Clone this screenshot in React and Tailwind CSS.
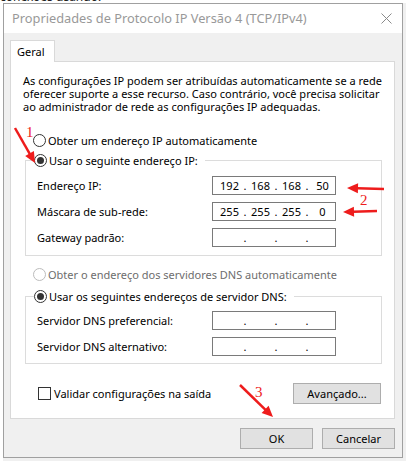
import React from "react";

function Radio({ checked, disabled }) {
  return (
    <span
      className={
        "w-[13px] h-[13px] rounded-full border bg-white flex items-center justify-center shrink-0 " +
        (disabled ? "border-[#bcbcbc]" : "border-[#333333]")
      }
    >
      {checked ? <span className="w-[7px] h-[7px] rounded-full bg-[#333333]" /> : null}
    </span>
  );
}

function IpField({ parts }) {
  return (
    <div className="w-[124px] h-[19px] border border-[#7a7a7a] bg-white flex items-center pl-[5px]">
      {[0, 1, 2, 3].map((i) => (
        <React.Fragment key={i}>
          <span className="w-[23px] text-center">{parts ? parts[i] : ""}</span>
          {i < 3 ? <span className="w-[8px] text-center">.</span> : null}
        </React.Fragment>
      ))}
    </div>
  );
}

function Row({ label, parts, first }) {
  return (
    <div className={"flex items-center " + (first ? "" : "mt-[7px]")}>
      <span className="w-[175px]">{label}</span>
      <IpField parts={parts} />
    </div>
  );
}

function arrow(x1, y1, x2, y2) {
  const dx = x2 - x1;
  const dy = y2 - y1;
  const len = Math.sqrt(dx * dx + dy * dy);
  const ux = dx / len;
  const uy = dy / len;
  const hl = 11;
  const hw = 5;
  const bx = x2 - ux * hl;
  const by = y2 - uy * hl;
  const pts = `${x2},${y2} ${bx - uy * hw},${by + ux * hw} ${bx + uy * hw},${by - ux * hw}`;
  return (
    <g key={`${x1}-${y1}`}>
      <line x1={x1} y1={y1} x2={bx + ux} y2={by + uy} stroke="#ee1c1c" strokeWidth="2.5" />
      <polygon points={pts} fill="#ee1c1c" />
    </g>
  );
}

export default function App() {
  return (
    <div className="relative w-[406px] h-[461px] overflow-hidden bg-[#f0f0f0] font-['Noto_Sans',sans-serif] text-[11px] leading-[13px] text-black">
      {/* what shows behind the dialog */}
      <div className="h-[3px] overflow-hidden bg-white">
        <div className="-mt-[10px] text-[12px] leading-[13px] text-[#222]">conexões usando:</div>
      </div>

      <div className="flex">
        <div className="w-[3px] h-[458px] bg-white" />

        {/* dialog */}
        <div className="w-[400px] h-[455px] border border-[#a0a0a0] bg-[#f0f0f0] flex flex-col">
          <div className="h-[29px] bg-white flex items-center pl-[8px] pr-[10px]">
            <span className="text-[12.8px] text-[#999999] flex-1">Propriedades de Protocolo IP Versão 4 (TCP/IPv4)</span>
            <svg width="11" height="11" viewBox="0 0 11 11">
              <path d="M0.5 0.5 L10.5 10.5 M10.5 0.5 L0.5 10.5" stroke="#8a8a8a" strokeWidth="1" />
            </svg>
          </div>

          {/* tab */}
          <div className="mt-[7px] ml-[6px] flex">
            <div className="relative z-10 -mb-px w-[45px] h-[22px] border-t border-l border-r border-[#d9d9d9] bg-white pl-[6px] pt-[4px]">
              Geral
            </div>
          </div>

          {/* tab panel */}
          <div className="ml-[6px] w-[385px] h-[358px] border border-[#d9d9d9] bg-white pt-[12px]">
            <p className="pl-[12px] whitespace-nowrap">
              As configurações IP podem ser atribuídas automaticamente se a rede
              <br />
              oferecer suporte a esse recurso. Caso contrário, você precisa solicitar
              <br />
              ao administrador de rede as configurações IP adequadas.
            </p>

            <div className="mt-[21px] ml-[22px] flex items-center gap-[2px]">
              <Radio />
              <span>Obter um endereço IP automaticamente</span>
            </div>

            <fieldset className="mt-[7px] ml-[14px] w-[357px] border border-[#dcdcdc] pl-[11px] pb-[8px]">
              <legend className="-ml-[3px] pr-[7px] flex items-center gap-[2px]">
                <Radio checked />
                <span>Usar o seguinte endereço IP:</span>
              </legend>
              <div className="mt-[9px]">
                <Row first label="Endereço IP:" parts={["192", "168", "168", "50"]} />
                <Row label="Máscara de sub-rede:" parts={["255", "255", "255", "0"]} />
                <Row label="Gateway padrão:" />
              </div>
            </fieldset>

            <div className="mt-[12px] ml-[22px] flex items-center gap-[2px] text-[#6d6d6d]">
              <Radio disabled />
              <span>Obter o endereço dos servidores DNS automaticamente</span>
            </div>

            <fieldset className="mt-[9px] ml-[14px] w-[357px] border border-[#dcdcdc] pl-[11px] pb-[7px]">
              <legend className="-ml-[3px] pr-[7px] flex items-center gap-[2px]">
                <Radio checked />
                <span>Usar os seguintes endereços de servidor DNS:</span>
              </legend>
              <div className="mt-[8px]">
                <Row first label="Servidor DNS preferencial:" />
                <Row label="Servidor DNS alternativo:" />
              </div>
            </fieldset>

            <div className="mt-[19px] flex items-center">
              <div className="ml-[27px] flex items-center gap-[3px] flex-1">
                <span className="w-[13px] h-[13px] border border-[#333333] bg-white" />
                <span>Validar configurações na saída</span>
              </div>
              <button className="mr-[13px] w-[88px] h-[21px] border border-[#adadad] bg-[#e1e1e1]">
                Avançado...
              </button>
            </div>
          </div>

          {/* dialog buttons */}
          <div className="mt-[9px] flex justify-end gap-[9px] pr-[7px]">
            <button className="w-[73px] h-[21px] border border-[#adadad] bg-[#e1e1e1]">OK</button>
            <button className="w-[73px] h-[21px] border border-[#adadad] bg-[#e1e1e1]">Cancelar</button>
          </div>
        </div>
      </div>

      {/* red annotations drawn on top of the screenshot */}
      <svg className="absolute inset-0 pointer-events-none" width="406" height="461">
        {arrow(15, 128, 35, 163)}
        {arrow(384, 189, 347, 188)}
        {arrow(377, 211, 343, 212)}
        {arrow(240, 385, 273, 417)}
        <text x="26" y="137" fill="#ee1c1c" fontSize="15" fontFamily="Liberation Serif, serif">1</text>
        <text x="360" y="205" fill="#ee1c1c" fontSize="15" fontFamily="Liberation Serif, serif">2</text>
        <text x="255" y="397" fill="#ee1c1c" fontSize="15" fontFamily="Liberation Serif, serif">3</text>
      </svg>
    </div>
  );
}
